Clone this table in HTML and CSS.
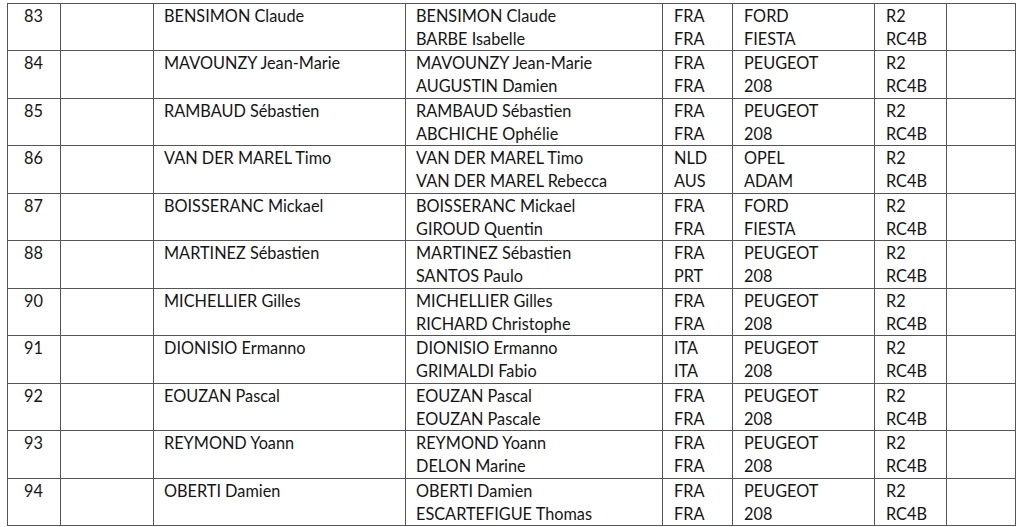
FILE: index.html
```html
<!DOCTYPE html>
<html lang="fr">
<head>
<meta charset="utf-8">
<title>Liste des engagés</title>
<link rel="stylesheet" href="styles.css">
</head>
<body>
<table class="entries">
  <colgroup>
    <col class="c-num"><col class="c-blank"><col class="c-entrant"><col class="c-crew">
    <col class="c-nat"><col class="c-car"><col class="c-class"><col class="c-end">
  </colgroup>
  <tbody>
    <tr><td class="num">83</td><td></td><td>BENSIMON Claude</td><td>BENSIMON Claude<br>BARBE Isabelle</td><td>FRA<br>FRA</td><td>FORD<br>FIESTA</td><td>R2<br>RC4B</td><td></td></tr>
    <tr><td class="num">84</td><td></td><td>MAVOUNZY Jean-Marie</td><td>MAVOUNZY Jean-Marie<br>AUGUSTIN Damien</td><td>FRA<br>FRA</td><td>PEUGEOT<br>208</td><td>R2<br>RC4B</td><td></td></tr>
    <tr><td class="num">85</td><td></td><td>RAMBAUD Sébastien</td><td>RAMBAUD Sébastien<br>ABCHICHE Ophélie</td><td>FRA<br>FRA</td><td>PEUGEOT<br>208</td><td>R2<br>RC4B</td><td></td></tr>
    <tr><td class="num">86</td><td></td><td>VAN DER MAREL Timo</td><td>VAN DER MAREL Timo<br>VAN DER MAREL Rebecca</td><td>NLD<br>AUS</td><td>OPEL<br>ADAM</td><td>R2<br>RC4B</td><td></td></tr>
    <tr><td class="num">87</td><td></td><td>BOISSERANC Mickael</td><td>BOISSERANC Mickael<br>GIROUD Quentin</td><td>FRA<br>FRA</td><td>FORD<br>FIESTA</td><td>R2<br>RC4B</td><td></td></tr>
    <tr><td class="num">88</td><td></td><td>MARTINEZ Sébastien</td><td>MARTINEZ Sébastien<br>SANTOS Paulo</td><td>FRA<br>PRT</td><td>PEUGEOT<br>208</td><td>R2<br>RC4B</td><td></td></tr>
    <tr><td class="num">90</td><td></td><td>MICHELLIER Gilles</td><td>MICHELLIER Gilles<br>RICHARD Christophe</td><td>FRA<br>FRA</td><td>PEUGEOT<br>208</td><td>R2<br>RC4B</td><td></td></tr>
    <tr><td class="num">91</td><td></td><td>DIONISIO Ermanno</td><td>DIONISIO Ermanno<br>GRIMALDI Fabio</td><td>ITA<br>ITA</td><td>PEUGEOT<br>208</td><td>R2<br>RC4B</td><td></td></tr>
    <tr><td class="num">92</td><td></td><td>EOUZAN Pascal</td><td>EOUZAN Pascal<br>EOUZAN Pascale</td><td>FRA<br>FRA</td><td>PEUGEOT<br>208</td><td>R2<br>RC4B</td><td></td></tr>
    <tr><td class="num">93</td><td></td><td>REYMOND Yoann</td><td>REYMOND Yoann<br>DELON Marine</td><td>FRA<br>FRA</td><td>PEUGEOT<br>208</td><td>R2<br>RC4B</td><td></td></tr>
    <tr><td class="num">94</td><td></td><td>OBERTI Damien</td><td>OBERTI Damien<br>ESCARTEFIGUE Thomas</td><td>FRA<br>FRA</td><td>PEUGEOT<br>208</td><td>R2<br>RC4B</td><td></td></tr>
  </tbody>
</table>
</body>
</html>
```

FILE: styles.css
```css
html, body {
  margin: 0;
  padding: 0;
  background: #ffffff;
}

body {
  padding: 3px 0 0 7px;
  font-family: Lato, "Open Sans", sans-serif;
  font-size: 16.3px;
  color: #151515;
}

.entries {
  border-collapse: collapse;
  table-layout: fixed;
  width: 1008px;
}

.c-num { width: 53px; }
.c-blank { width: 93px; }
.c-entrant { width: 252px; }
.c-crew { width: 257px; }
.c-nat { width: 70px; }
.c-car { width: 142px; }
.c-class { width: 72px; }
.c-end { width: 69px; }

.entries td {
  border: 1px solid #555555;
  vertical-align: top;
  padding: 0 4px 0 10px;
  line-height: 23px;
  height: 46px;
  white-space: nowrap;
  box-sizing: content-box;
}

.entries tr:nth-child(2n) td {
  height: 47px;
}

.entries td.num {
  padding-left: 16px;
}

.entries td:nth-child(5),
.entries td:nth-child(6),
.entries td:nth-child(7) {
  padding-left: 11px;
}
```
